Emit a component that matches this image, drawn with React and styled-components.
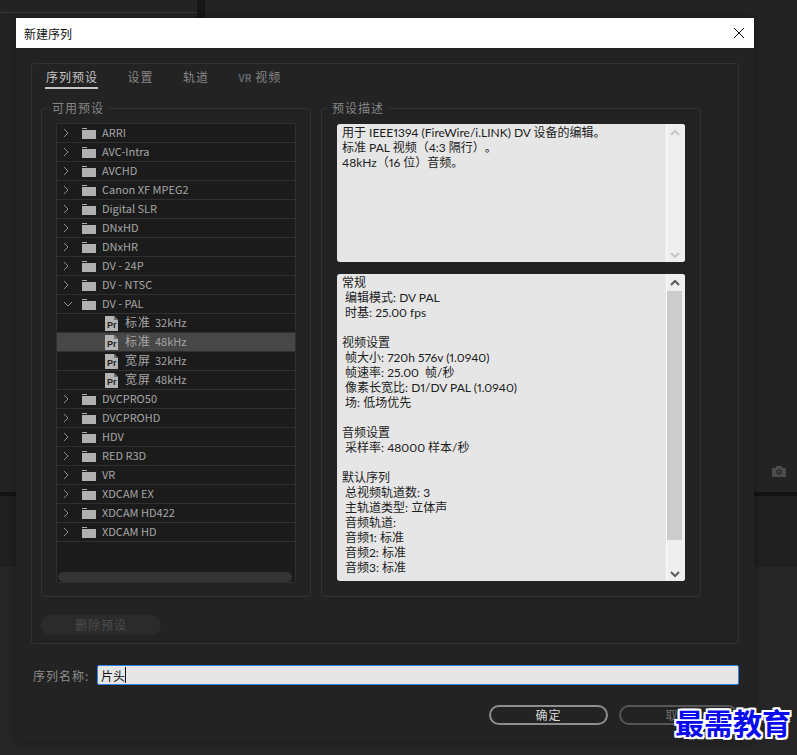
import React from "react";
import styled, { createGlobalStyle } from "styled-components";

const GlobalStyle = createGlobalStyle`
    * {
        box-sizing: border-box;
    }

    body {
        margin: 0;
        background: #232323;
        font-family: "Noto Sans CJK SC", "Noto Sans", sans-serif;
        font-size: 12px;
    }
`

const Page = styled.div`
    position: relative;
    width: 797px;
    height: 755px;
    overflow: hidden;
    background: #232323;
`

/* editor panels behind the modal */
const Backdrop = styled.div`
    position: absolute;
    inset: 0;
    display: flex;
    flex-direction: column;
`

const TopStrip = styled.div`
    display: flex;
    height: 18px;
`

const TopPanel = styled.div`
    width: 197px;
    height: 13px;
    border-bottom: 1px solid #343434;
`

const Gutter = styled.div`
    width: 8px;
    background: #161616;
`

const UpperArea = styled.div`
    flex: 1;
    display: flex;
    justify-content: flex-end;
    align-items: flex-end;
    padding: 0 11px 15px 0;
    color: #4c4c4c;
`

const Splitter = styled.div`
    height: 4px;
    background: #131313;
`

const LowerArea = styled.div`
    height: 71px;
    background: #202020;
`

const BottomArea = styled.div`
    height: 188px;
    background: #262626;
`

const Dialog = styled.div`
    position: absolute;
    left: 16px;
    top: 18px;
    width: 738px;
    height: 723px;
    display: flex;
    flex-direction: column;
    background: #232323;
    box-shadow: 0 0 8px rgba(0, 0, 0, 0.35);
`

const TitleBar = styled.div`
    display: flex;
    align-items: center;
    justify-content: space-between;
    height: 30px;
    padding: 0 9px 0 8px;
    background: #fff;
    color: #111;
    font-size: 12px;
`

const Body = styled.div`
    flex: 1;
    display: flex;
    flex-direction: column;
    padding: 15px 15px 0;
`

const Frame = styled.div`
    height: 581px;
    padding: 0 9px;
    border: 1px solid #323232;
    border-radius: 3px;
`

const Tabs = styled.div`
    display: flex;
    height: 25px;
    margin: 0 0 11px 4px;
    gap: 28.5px;
`

const Tab = styled.div`
    height: 25px;
    padding: 5px 0 0 1px;
    line-height: 16px;
    letter-spacing: 1px;
    color: ${({ $active }) => ($active ? "#c4c4c4" : "#858585")};
    border-bottom: 2px solid ${({ $active }) => ($active ? "#c4c4c4" : "transparent")};
`

const VrLabel = styled.span`
    color: #5f6670;
    font-weight: bold;
    font-size: 10px;
    letter-spacing: 0;
`

const Groups = styled.div`
    display: flex;
    gap: 10px;
`

const Group = styled.fieldset`
    width: ${({ $width }) => $width}px;
    height: 497px;
    min-width: 0;
    margin: 0;
    padding: 0;
    border: 1px solid #323232;
    border-radius: 3px;
`

const GroupTitle = styled.legend`
    margin-left: 5px;
    padding: 0 5px;
    line-height: 16px;
    letter-spacing: 1px;
    color: #868686;
`

const GroupBody = styled.div`
    padding: ${({ $top }) => $top}px 0 0 ${({ $left }) => $left}px;
`

const Tree = styled.div`
    width: 240px;
    height: 460px;
    display: flex;
    flex-direction: column;
    background: #1b1b1b;
    border: 1px solid #303030;
    border-radius: 2px;
`

const Row = styled.div`
    flex: none;
    display: flex;
    align-items: center;
    height: 19px;
    padding-left: ${({ $child }) => ($child ? 48 : 6)}px;
    border-bottom: 1px solid #303030;
    background: ${({ $selected }) => ($selected ? "#474747" : "transparent")};
    color: #a6a6a6;
    font-size: 11px;
    white-space: nowrap;
`

const Twist = styled.span`
    display: flex;
    width: 12px;
    margin-right: 7px;
    color: #8c8c8c;
`

const RowLabel = styled.span`
    margin: -2px 0 0 ${({ $child }) => ($child ? 7 : 6)}px;
    line-height: 18px;
`

const Cjk = styled.span`
    font-size: 12px;
    letter-spacing: 1px;
    margin-right: 4px;
`

const TreeScroll = styled.div`
    height: 10px;
    margin: auto 3px 0 1px;
    background: #343434;
    border-radius: 5px;
`

const DeleteButton = styled.div`
    width: 120px;
    height: 20px;
    margin-top: 18px;
    border-radius: 10px;
    background: #2b2b2b;
    color: #4d4d4d;
    line-height: 20px;
    letter-spacing: 1px;
    text-align: center;
`

const TextBox = styled.div`
    display: flex;
    width: 348px;
    height: ${({ $height }) => $height}px;
    margin-bottom: 12px;
    background: #e6e6e6;
    border-radius: 3px;
    overflow: hidden;
`

const BoxText = styled.div`
    flex: 1;
    padding: 1px 5px 0;
    color: #1c1c1c;
    font-family: Lato, "Noto Sans CJK SC", sans-serif;
    font-variant-numeric: proportional-nums;
    line-height: 15px;
    white-space: pre;
    text-spacing-trim: space-all;
`

const ScrollBar = styled.div`
    width: 19px;
    display: flex;
    flex-direction: column;
    align-items: center;
    justify-content: space-between;
    padding: 5px 3px 3px 0;
    background: #efefef;
    border-left: 1px solid #fafafa;
    color: ${({ $disabled }) => ($disabled ? "#c6c6c6" : "#5c5c5c")};
`

const ScrollThumb = styled.div`
    align-self: stretch;
    height: 249px;
    margin-top: 5px;
    margin-bottom: auto;
    background: #cccccc;
`

const NameRow = styled.div`
    display: flex;
    align-items: center;
    height: 20px;
    margin-top: 21px;
    padding-left: 2px;
`

const NameLabel = styled.div`
    width: 64px;
    color: #8c8c8c;
    letter-spacing: 1px;
    white-space: nowrap;
`

const NameField = styled.div`
    flex: 1;
    display: flex;
    align-items: center;
    height: 20px;
    padding-left: 3px;
    background: #e6e6e6;
    border: 1px solid #2d84e4;
    border-radius: 2px;
    color: #111;
`

const Caret = styled.span`
    width: 1px;
    height: 16px;
    background: #111;
`

const Actions = styled.div`
    display: flex;
    justify-content: flex-end;
    gap: 11px;
    margin-top: 20px;
    padding-right: 1px;
`

const ActionButton = styled.div`
    width: 119px;
    height: 20px;
    border: 2px solid ${({ $dim }) => ($dim ? "#565656" : "#8e8e8e")};
    border-radius: 10px;
    color: ${({ $dim }) => ($dim ? "#6e6e6e" : "#d6d6d6")};
    line-height: 15px;
    letter-spacing: 1px;
    text-align: center;
`

const Watermark = styled.div`
    position: absolute;
    left: 675px;
    top: 702px;
    width: 120px;
    font-size: 29px;
    line-height: 40px;
    font-weight: bold;
    white-space: nowrap;
    color: #0a0aee;
    text-shadow:
        2px 0 0 #fff, -2px 0 0 #fff, 0 2px 0 #fff, 0 -2px 0 #fff,
        2px 2px 0 #fff, -2px 2px 0 #fff, 2px -2px 0 #fff, -2px -2px 0 #fff;
`

const Chevron = ({ open }) => (
    <svg width="10" height="10" viewBox="0 0 10 10" fill="none" stroke="currentColor" strokeWidth="1">
        <path d={open ? "M1 3l4 4 4-4" : "M1 1l4 4-4 4"} />
    </svg>
)

const FolderIcon = () => (
    <svg width="14" height="11" viewBox="0 0 14 11" fill="#b0b0b0">
        <path d="M0 0h5v1H0z" />
        <path d="M0 2h14v9H0z" />
    </svg>
)

const PresetIcon = () => (
    <svg width="13" height="15" viewBox="0 0 13 15">
        <path d="M0 0h9l4 4v11H0z" fill="#b4b4b4" />
        <path d="M9 0v4h4z" fill="#6e6e6e" />
        <text x="2" y="12" fontFamily="Liberation Sans" fontSize="9" fontWeight="bold" fill="#222">Pr</text>
    </svg>
)

const ArrowIcon = ({ up }) => (
    <svg width="10" height="7" viewBox="0 0 10 7" fill="none" stroke="currentColor" strokeWidth="2">
        <path d={up ? "M1 6l4-4 4 4" : "M1 1l4 4 4-4"} />
    </svg>
)

const CameraIcon = () => (
    <svg width="14" height="11" viewBox="0 0 14 11" style={{ display: "block" }}>
        <path
            fillRule="evenodd"
            fill="currentColor"
            d="M0 2h3.5l1-2h5l1 2H14v9H0zM7 3.2a2.6 2.6 0 1 0 0 5.2 2.6 2.6 0 0 0 0-5.2zM7 4.4a1.4 1.4 0 1 1 0 2.8 1.4 1.4 0 0 1 0-2.8z"
        />
    </svg>
)

const CloseIcon = () => (
    <svg width="12" height="12" viewBox="0 0 12 12" stroke="#111" strokeWidth="1" fill="none">
        <path d="M1 1l10 10M11 1L1 11" />
    </svg>
)

const folders = [
    "ARRI", "AVC-Intra", "AVCHD", "Canon XF MPEG2", "Digital SLR", "DNxHD", "DNxHR", "DV - 24P", "DV - NTSC",
]

const foldersAfter = [
    "DVCPRO50", "DVCPROHD", "HDV", "RED R3D", "VR", "XDCAM EX", "XDCAM HD422", "XDCAM HD",
]

const presets = [
    { name: "标准", rate: "32kHz" },
    { name: "标准", rate: "48kHz", selected: true },
    { name: "宽屏", rate: "32kHz" },
    { name: "宽屏", rate: "48kHz" },
]

const description = `用于 IEEE1394 (FireWire/i.LINK) DV 设备的编辑。
标准 PAL 视频（4:3 隔行）。
48kHz（16 位）音频。`

const details = `常规
 编辑模式: DV PAL
 时基: 25.00 fps

视频设置
 帧大小: 720h 576v (1.0940)
 帧速率: 25.00  帧/秒
 像素长宽比: D1/DV PAL (1.0940)
 场: 低场优先

音频设置
 采样率: 48000 样本/秒

默认序列
 总视频轨道数: 3
 主轨道类型: 立体声
 音频轨道:
 音频1: 标准
 音频2: 标准
 音频3: 标准`

const FolderRow = ({ name, open }) => (
    <Row>
        <Twist><Chevron open={open} /></Twist>
        <FolderIcon />
        <RowLabel>{name}</RowLabel>
    </Row>
)

const App = () => (
    <Page>
        <GlobalStyle />

        <Backdrop>
            <TopStrip>
                <TopPanel />
                <Gutter />
            </TopStrip>
            <UpperArea>
                <CameraIcon />
            </UpperArea>
            <Splitter />
            <LowerArea />
            <BottomArea />
        </Backdrop>

        <Dialog>
            <TitleBar>
                新建序列
                <CloseIcon />
            </TitleBar>

            <Body>
                <Frame>
                    <Tabs>
                        <Tab $active>序列预设</Tab>
                        <Tab>设置</Tab>
                        <Tab>轨道</Tab>
                        <Tab><VrLabel>VR</VrLabel> 视频</Tab>
                    </Tabs>

                    <Groups>
                        <Group $width={270}>
                            <GroupTitle>可用预设</GroupTitle>
                            <GroupBody $top={7} $left={14}>
                                <Tree>
                                    {folders.map((name) => <FolderRow key={name} name={name} />)}
                                    <FolderRow name="DV - PAL" open />
                                    {presets.map(({ name, rate, selected }) => (
                                        <Row key={name + rate} $child $selected={selected}>
                                            <PresetIcon />
                                            <RowLabel $child><Cjk>{name}</Cjk>{rate}</RowLabel>
                                        </Row>
                                    ))}
                                    {foldersAfter.map((name) => <FolderRow key={name} name={name} />)}
                                    <TreeScroll />
                                </Tree>
                            </GroupBody>
                        </Group>

                        <Group $width={380}>
                            <GroupTitle>预设描述</GroupTitle>
                            <GroupBody $top={8} $left={15}>
                                <TextBox $height={138}>
                                    <BoxText>{description}</BoxText>
                                    <ScrollBar $disabled>
                                        <ArrowIcon up />
                                        <ArrowIcon />
                                    </ScrollBar>
                                </TextBox>
                                <TextBox $height={307}>
                                    <BoxText>{details}</BoxText>
                                    <ScrollBar>
                                        <ArrowIcon up />
                                        <ScrollThumb />
                                        <ArrowIcon />
                                    </ScrollBar>
                                </TextBox>
                            </GroupBody>
                        </Group>
                    </Groups>

                    <DeleteButton>删除预设</DeleteButton>
                </Frame>

                <NameRow>
                    <NameLabel>序列名称:</NameLabel>
                    <NameField>片头<Caret /></NameField>
                </NameRow>

                <Actions>
                    <ActionButton>确定</ActionButton>
                    <ActionButton $dim>取消</ActionButton>
                </Actions>
            </Body>
        </Dialog>

        <Watermark>最需教育</Watermark>
    </Page>
)

export default App;
